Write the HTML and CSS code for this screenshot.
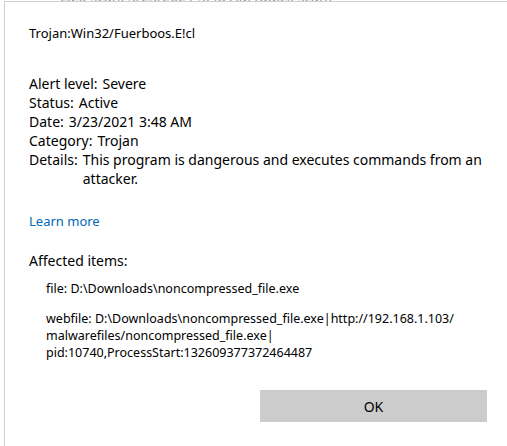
FILE: index.html
```html
<!DOCTYPE html>
<html>
<head>
<meta charset="utf-8">
<link rel="stylesheet" href="styles.css">
</head>
<body>
<div class="backdrop"><span>Last scan: 3/23/2021 3:48 AM (quick scan)</span></div>
<div class="dialog">
  <div class="title">Trojan:Win32/Fuerboos.E!cl</div>
  <div class="info">
    <div class="row"><span class="label">Alert level:</span><span class="value">Severe</span></div>
    <div class="row"><span class="label">Status:</span><span class="value">Active</span></div>
    <div class="row"><span class="label">Date:</span><span class="value">3/23/2021 3:48 AM</span></div>
    <div class="row"><span class="label">Category:</span><span class="value">Trojan</span></div>
    <div class="row"><span class="label">Details:</span><span class="value">This program is dangerous and executes commands from an attacker.</span></div>
  </div>
  <a class="learn" href="#">Learn more</a>
  <div class="affected">Affected items:</div>
  <ul class="items">
    <li>file: D:\Downloads\noncompressed_file.exe</li>
    <li>webfile: D:\Downloads\noncompressed_file.exe|http://192.168.1.103/<br>malwarefiles/noncompressed_file.exe|<br>pid:10740,ProcessStart:132609377372464487</li>
  </ul>
  <div class="actions"><button class="ok">OK</button></div>
</div>
</body>
</html>
```
FILE: styles.css
```css
html, body {
  margin: 0;
  padding: 0;
  background: #ffffff;
}
body {
  width: 507px;
  height: 446px;
  overflow: hidden;
  font-family: "Noto Sans", "Open Sans", sans-serif;
  color: #000000;
}
.backdrop {
  height: 1px;
  overflow: hidden;
  padding-left: 60px;
  font-size: 14px;
  color: #9a9a9a;
}
.backdrop span {
  display: block;
  margin-top: -13px;
}
.dialog {
  margin-left: 4px;
  border-left: 1px solid #cfcfcf;
  border-top: 1px solid #cfcfcf;
  padding-left: 24px;
  height: 445px;
  box-sizing: border-box;
}
.title {
  font-size: 13px;
  line-height: 20px;
  padding-top: 21px;
}
.info {
  margin-top: 31px;
  font-size: 14px;
  line-height: 19px;
}
.row {
  display: flex;
  padding-right: 20px;
}
.label {
  white-space: nowrap;
  margin-right: 5px;
}
.learn {
  display: block;
  margin-top: 24px;
  font-size: 13px;
  line-height: 19px;
  color: #0067b8;
  text-decoration: none;
}
.affected {
  margin-top: 20px;
  font-size: 14px;
  line-height: 19px;
}
.items {
  list-style: none;
  margin: 10px 0 0 0;
  padding: 0 0 0 17px;
  font-size: 12.5px;
  line-height: 17px;
}
.items li {
  margin-bottom: 13px;
}
.items li:last-child {
  margin-bottom: 0;
}
.actions {
  display: flex;
  justify-content: flex-end;
  padding-right: 20px;
  margin-top: 29px;
}
.ok {
  width: 227px;
  height: 32px;
  border: none;
  background: #cccccc;
  font-family: "Noto Sans", "Open Sans", sans-serif;
  font-size: 14px;
  color: #000;
}
```
